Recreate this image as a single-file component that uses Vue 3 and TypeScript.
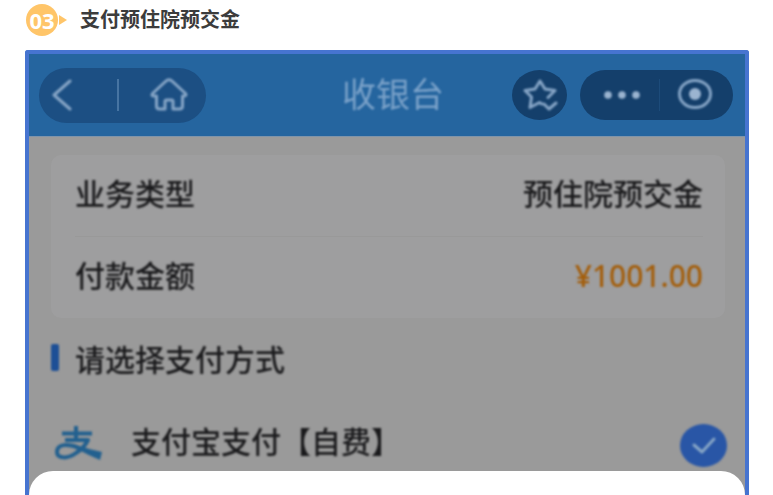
<script setup lang="ts">
import { ref } from 'vue'

interface DetailRow {
  label: string
  value: string
  highlight?: boolean
}

const rows: DetailRow[] = [
  { label: '业务类型', value: '预住院预交金' },
  { label: '付款金额', value: '¥1001.00', highlight: true },
]

const method = ref('alipay')
</script>

<template>
  <main class="page">
    <header class="step">
      <span class="step-number">03</span>
      <span class="step-arrow"></span>
      <h1 class="step-title">支付预住院预交金</h1>
    </header>

    <section class="phone">
      <nav class="bar">
        <div class="bar-side">
          <div class="capsule nav-capsule">
            <button type="button" class="icon-button" aria-label="返回">
              <svg class="soft" width="24" height="34" viewBox="0 0 24 34">
                <path d="M19 3 3 17l16 14" />
              </svg>
            </button>
            <span class="capsule-line"></span>
            <button type="button" class="icon-button" aria-label="首页">
              <svg class="soft" width="40" height="36" viewBox="0 0 40 36">
                <path d="M16.500 4.500Q20 1 23.500 4.500L36.500 16.500Q38 19 34.500 19H33.500V29Q33.500 32 30.500 32H24V24.500Q24 23 22.500 23H17.500Q16 23 16 24.500V32H10.500Q7.500 32 7.500 29V19H5Q2 19 3.500 16.500Z" />
              </svg>
            </button>
          </div>
        </div>
        <h2 class="bar-title soft">收银台</h2>
        <div class="bar-side bar-right">
          <button type="button" class="star-button" aria-label="收藏">
            <svg class="soft" width="36" height="34" viewBox="0 0 36 34">
              <path d="m20 26-2.500-1.500-9.500 5L9.500 19 3 12.500l10-1.500L18 3l5 8 10 1.500-7 7" />
              <path d="m22 26 5 5 7-6" />
            </svg>
          </button>
          <div class="capsule menu-capsule">
            <button type="button" class="icon-button" aria-label="更多">
              <svg class="dots soft" width="40" height="12" viewBox="0 0 40 12">
                <circle cx="6" cy="6" r="3.800" />
                <circle cx="20" cy="6" r="3.800" />
                <circle cx="34" cy="6" r="3.800" />
              </svg>
            </button>
            <span class="capsule-line faint"></span>
            <button type="button" class="icon-button" aria-label="关闭">
              <svg class="soft" width="36" height="34" viewBox="0 0 36 34">
                <ellipse cx="18" cy="16" rx="15.500" ry="13.500" />
                <circle class="core" cx="18" cy="16" r="6" />
              </svg>
            </button>
          </div>
        </div>
      </nav>

      <div class="content">
        <dl class="card">
          <div v-for="row in rows" :key="row.label" class="card-row">
            <dt class="soft">{{ row.label }}</dt>
            <dd class="soft" :class="{ amount: row.highlight }">{{ row.value }}</dd>
          </div>
        </dl>

        <h3 class="section-title soft">请选择支付方式</h3>

        <label class="method">
          <svg class="alipay soft" width="50" height="36" viewBox="0 0 50 36">
            <path class="mark" d="M8 8.500H38M22 1V15M11 15H34Q30 23 22 28C14 34 3 34 3 27C3 19 14 18 25 23" />
            <path class="tail" d="M19 19Q34 24 48 27L46 35Q34 30 23 24Z" />
          </svg>
          <span class="method-name soft">支付宝支付【自费】</span>
          <input v-model="method" class="radio" type="radio" name="method" value="alipay" />
          <span class="tick soft">
            <svg width="28" height="24" viewBox="0 0 28 24">
              <path d="m4 12 8 7L24 6" />
            </svg>
          </span>
        </label>
      </div>

      <div class="sheet"></div>
    </section>
  </main>
</template>

<style>
body {
  background: #fff;
}
</style>

<style scoped>
.page {
  display: flex;
  flex-direction: column;
  box-sizing: border-box;
  min-height: 100vh;
  padding: 4px 24px 0 25px;
  font-family: "Noto Sans", "Noto Sans CJK SC", sans-serif;
  color: #1a1a1c;
}

h1, h2, h3, dl, dd {
  margin: 0;
}

button {
  padding: 0;
  border: 0;
  background: none;
}

svg {
  display: block;
  fill: none;
  stroke: #86a5c6;
  stroke-width: 3;
  stroke-linecap: round;
  stroke-linejoin: round;
}

.soft {
  filter: blur(1px);
}

.step {
  display: flex;
  align-items: center;
  height: 32px;
  margin-bottom: 14px;
}

.step-number {
  width: 32px;
  margin-left: 1px;
  border-radius: 50%;
  background: #ffc569;
  color: #fff;
  font: bold 22px/32px "Open Sans", sans-serif;
  text-align: center;
}

.step-arrow {
  margin-left: 1px;
  border: solid transparent;
  border-width: 5px 0 5px 8px;
  border-left-color: #ffc569;
}

.step-title {
  margin-left: 13px;
  color: #3c3c3c;
  font: bold 20px/30px "Noto Sans CJK SC", sans-serif;
  padding-bottom: 2px;
}

.phone {
  display: flex;
  flex: 1;
  flex-direction: column;
  border: 4px solid #4674d0;
  border-bottom: 0;
  border-radius: 3px 3px 0 0;
  background: #9a9a9a;
}

.bar {
  display: flex;
  align-items: center;
  height: 82px;
  padding: 0 12px 0 10px;
  border-bottom: 1px solid #7f94aa;
  background: #25659f;
}

.bar-side {
  display: flex;
  flex: 1;
}

.bar-right {
  justify-content: flex-end;
  gap: 13px;
}

.bar-title {
  padding: 0 0 4px 14px;
  color: #7ba2c9;
  font: 400 34px/48px "Noto Sans CJK SC", sans-serif;
}

.capsule {
  display: flex;
  align-items: center;
  border-radius: 28px;
}

.nav-capsule {
  gap: 30px;
  height: 55px;
  padding: 0 17px 0 12px;
  background: #1c4f83;
}

.menu-capsule {
  gap: 17px;
  height: 50px;
  padding: 0 20px 0 22px;
  background: #143f6b;
}

.capsule-line {
  width: 2px;
  height: 32px;
  margin-left: 12px;
  background: #4674a2;
}

.capsule-line.faint {
  width: 1px;
  margin-left: 0;
  background: #1c4b7a;
}

.star-button {
  display: grid;
  place-items: center;
  width: 55px;
  height: 50px;
  border-radius: 50%;
  background: #143f6b;
}

.dots circle,
.core {
  fill: #9bb4d0;
  stroke: none;
}

.content {
  padding: 18px 20px 0 22px;
}

.card {
  padding: 0 22px 0 24px;
  border-radius: 10px;
  background: #9e9e9f;
}

.card-row {
  display: flex;
  align-items: center;
  justify-content: space-between;
  height: 77px;
  padding-bottom: 4px;
  font-size: 30px;
  font-weight: 500;
  line-height: 40px;
}

.card-row + .card-row {
  border-top: 1px solid #999;
}

.amount {
  color: #a35e0c;
}

.section-title {
  display: flex;
  align-items: center;
  gap: 16px;
  height: 79px;
  font-size: 30px;
  font-weight: 500;
}

.section-title::before {
  width: 8px;
  height: 27px;
  border-radius: 2px;
  background: #1d4f96;
  content: "";
}

.method {
  position: relative;
  display: flex;
  align-items: center;
  height: 52px;
  padding: 22px 0 0 3px;
  font-size: 30px;
  font-weight: 500;
  line-height: 40px;
}

.alipay {
  padding-bottom: 4px;
}

.alipay .mark {
  stroke: #22608f;
  stroke-linecap: butt;
  stroke-width: 4;
}

.alipay .tail {
  fill: #22608f;
  stroke: none;
}

.method-name {
  flex: 1;
  margin-left: 27px;
  padding-bottom: 6px;
}

.radio {
  position: absolute;
  opacity: 0;
}

.tick {
  display: grid;
  place-items: center;
  width: 47px;
  height: 43px;
  margin-right: -2px;
  border-radius: 50%;
  background: #2956a6;
}

.sheet {
  flex: 1;
  min-height: 24px;
  border-radius: 28px 28px 0 0;
  background: #fff;
}
</style>
